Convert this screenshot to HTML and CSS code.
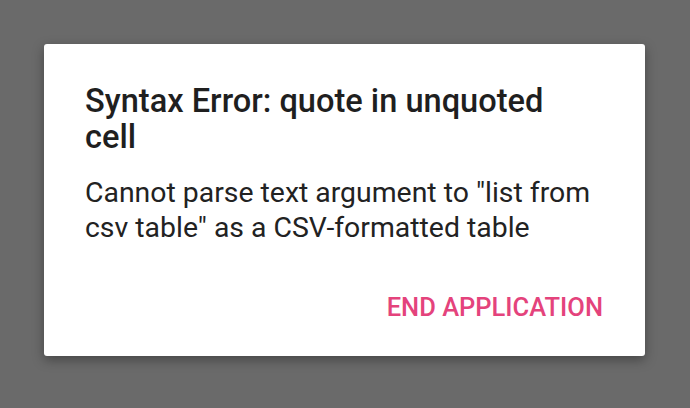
FILE: index.html
```html
<!DOCTYPE html>
<html lang="en">
<head>
    <meta charset="UTF-8">
    <title>Error</title>
    <link rel="stylesheet" href="styles.css">
</head>
<body>
    <div class="overlay">
        <div class="dialog">
            <h2 class="title">Syntax Error: quote in unquoted cell</h2>
            <p class="message">Cannot parse text argument to "list from csv table" as a CSV-formatted table</p>
            <div class="actions">
                <button class="btn">END APPLICATION</button>
            </div>
        </div>
    </div>
</body>
</html>
```

FILE: styles.css
```css
html, body {
    margin: 0;
    padding: 0;
    height: 100%;
}
body {
    background: #6a6a6a;
    font-family: Roboto, "Noto Sans", sans-serif;
}
.overlay {
    padding: 44px 45px 0 44px;
}
.dialog {
    width: 601px;
    height: 312px;
    box-sizing: border-box;
    background: #fff;
    border-radius: 3px;
    box-shadow: 0 4px 12px rgba(0, 0, 0, 0.35);
    padding: 39px 40px 0 41px;
}
.title {
    margin: 0;
    max-width: 500px;
    font-size: 32.6px;
    font-weight: 500;
    line-height: 36px;
    color: #1f1f1f;
}
.message {
    margin: 20px 0 0 0;
    font-size: 28.4px;
    line-height: 35px;
    color: #222;
}
.actions {
    display: flex;
    justify-content: flex-end;
    margin-top: 47px;
}
.btn {
    background: none;
    border: none;
    padding: 0;
    margin-right: 2px;
    font-family: inherit;
    font-size: 25.5px;
    font-weight: 500;
    color: #e4437c;
    line-height: 30px;
}
```
